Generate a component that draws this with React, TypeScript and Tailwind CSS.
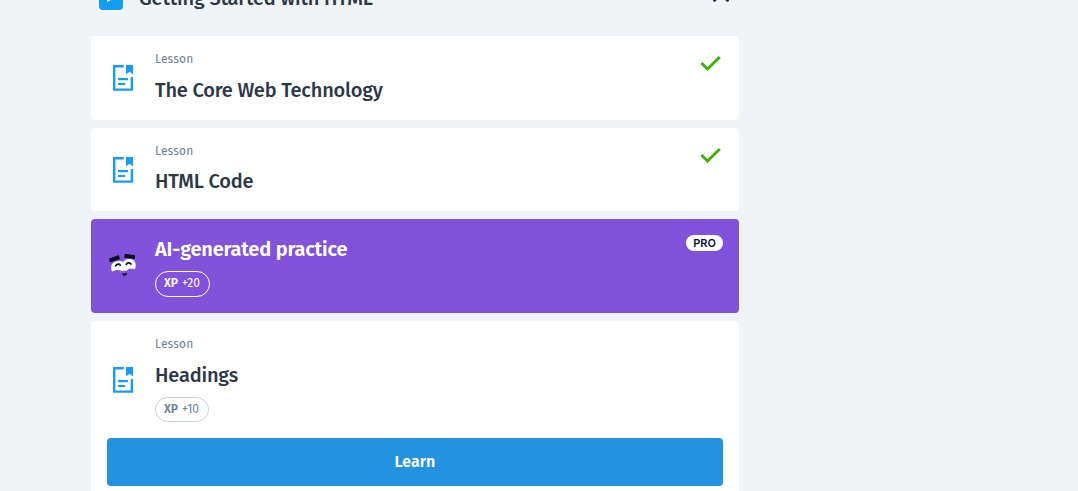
import React from "react";

function LessonIcon() {
  return (
    <svg width="22" height="28" viewBox="0 0 22 28" className="ml-[21px] shrink-0" fill="none">
      <path d="M11.8 2.2H2.2V25.6H19.9V13" stroke="#149ef2" strokeWidth="2.4" />
      <path d="M14 1H21V10.3L17.5 7.8L14 10.3Z" fill="#149ef2" />
      <path d="M6 15.2H16M6 20H13.2" stroke="#149ef2" strokeWidth="2.2" />
    </svg>
  );
}

function Face() {
  return (
    <svg width="30" height="26" viewBox="0 0 30 26" className="ml-[17px] shrink-0">
      <path d="M4 19.6C2.4 15 3 10.6 8 9.5C11 8.5 13.5 8.8 15 10C17 7 22 6.3 25 8C28.2 9.7 28.2 14.5 26.8 17.6C24.5 16 21.5 16.3 19.3 18C17.8 19.4 15.5 18.4 14.2 19.2C11 17.4 7.5 17.6 4 19.6Z" fill="#fff" />
      <path d="M3.3 7.9L9.6 5.7M18.4 4L25 4.9" stroke="#0a0e25" strokeWidth="3.9" strokeLinecap="square" />
      <path d="M7.7 14C8.5 11.7 11.4 11.7 12.2 13.2M18.4 12.4C19.3 10.4 22 10.4 23 12" fill="none" stroke="#0a0e25" strokeWidth="1.7" strokeLinecap="round" />
      <path d="M14 21.2C15.5 21.8 17.5 21.6 19 20.8C18.8 24.6 14.8 24.8 14 21.2Z" fill="#0a0e25" />
    </svg>
  );
}

function Check() {
  return (
    <svg width="22" height="18" viewBox="0 0 22 18" className="mt-[18px] mr-[18px] shrink-0">
      <path d="M2.5 9L8.5 15L20.8 3" fill="none" stroke="#3fb00a" strokeWidth="3" />
    </svg>
  );
}

function LessonCard({ title, height, offset }: { title: string; height: string; offset: string }) {
  return (
    <div className={`flex rounded bg-white ${height}`}>
      <div className="flex w-16 items-center">
        <LessonIcon />
      </div>
      <div className="flex-1 pt-[14px]">
        <div className="text-xs leading-[18px] tracking-[0.2px] text-[#6b7f99]">Lesson</div>
        <div className={`text-xl leading-7 font-medium tracking-[-0.18px] whitespace-nowrap text-[#2d3846] ${offset}`}>{title}</div>
      </div>
      <Check />
    </div>
  );
}

export default function App() {
  return (
    <div className="h-[491px] overflow-hidden bg-[#f0f4f7] pl-[91px] font-['Fira_Sans','Noto_Sans',sans-serif]">
      <div className="flex w-[648px] flex-col gap-2">
        <div className="flex h-7 pr-[9px] pl-2">
          <div className="-mt-[14px] flex h-6 w-6 items-center justify-center rounded bg-[#149ef2]">
            <svg width="10" height="12" viewBox="0 0 10 12"><path d="M1 2L9 6L1 10Z" fill="#fff" /></svg>
          </div>
          <div className="-mt-4 ml-4 flex-1 text-xl leading-7 font-medium tracking-[-0.17px] text-[#2d3846]">Getting Started with HTML</div>
          <svg width="18" height="12" viewBox="0 0 18 12" className="-mt-[10px]"><path d="M2.5 10.2L9 3.7L15.5 10.2" fill="none" stroke="#20293a" strokeWidth="3" strokeLinecap="round" /></svg>
        </div>
        <LessonCard title="The Core Web Technology" height="h-[84px]" offset="mt-2" />
        <LessonCard title="HTML Code" height="h-[83px]" offset="mt-[7px]" />
        <div className="flex h-[94px] rounded bg-[#8352da] text-white">
          <div className="flex w-16 items-center pb-0.5"><Face /></div>
          <div className="flex-1 pt-4">
            <div className="text-xl leading-7 font-semibold tracking-[-0.19px] whitespace-nowrap">AI-generated practice</div>
            <div className="mt-2 flex h-[26px] w-[55px] items-center rounded-full border border-white pb-0.5 pl-2 text-xs whitespace-nowrap">
              <b className="mr-1 font-semibold">XP</b><span className="tracking-[0px]">+20</span>
            </div>
          </div>
          <div className="mt-4 mr-4 flex h-4 w-[37px] items-center justify-center rounded-full bg-white font-['Inter'] text-[11px] font-semibold text-[#0a1430]">PRO</div>
        </div>
        <div className="h-[181px] shrink-0 rounded bg-white">
          <div className="flex h-[117px]">
            <div className="flex w-16 items-center"><LessonIcon /></div>
            <div className="pt-[14px]">
              <div className="text-xs leading-[18px] tracking-[0.2px] text-[#6b7f99]">Lesson</div>
              <div className="mt-2 text-xl leading-7 font-medium tracking-[-0.17px] text-[#2d3846]">Headings</div>
              <div className="mt-2 flex h-[25px] w-[54px] items-center rounded-full border border-[#c8d2db] pb-px pl-2 text-xs whitespace-nowrap text-[#6b7f99]">
                <b className="mr-1 font-semibold">XP</b><span className="tracking-[0px]">+10</span>
              </div>
            </div>
          </div>
          <button className="mx-4 flex h-12 w-[616px] items-center justify-center rounded bg-[#2493df] text-base font-semibold text-white">Learn</button>
        </div>
      </div>
    </div>
  );
}
